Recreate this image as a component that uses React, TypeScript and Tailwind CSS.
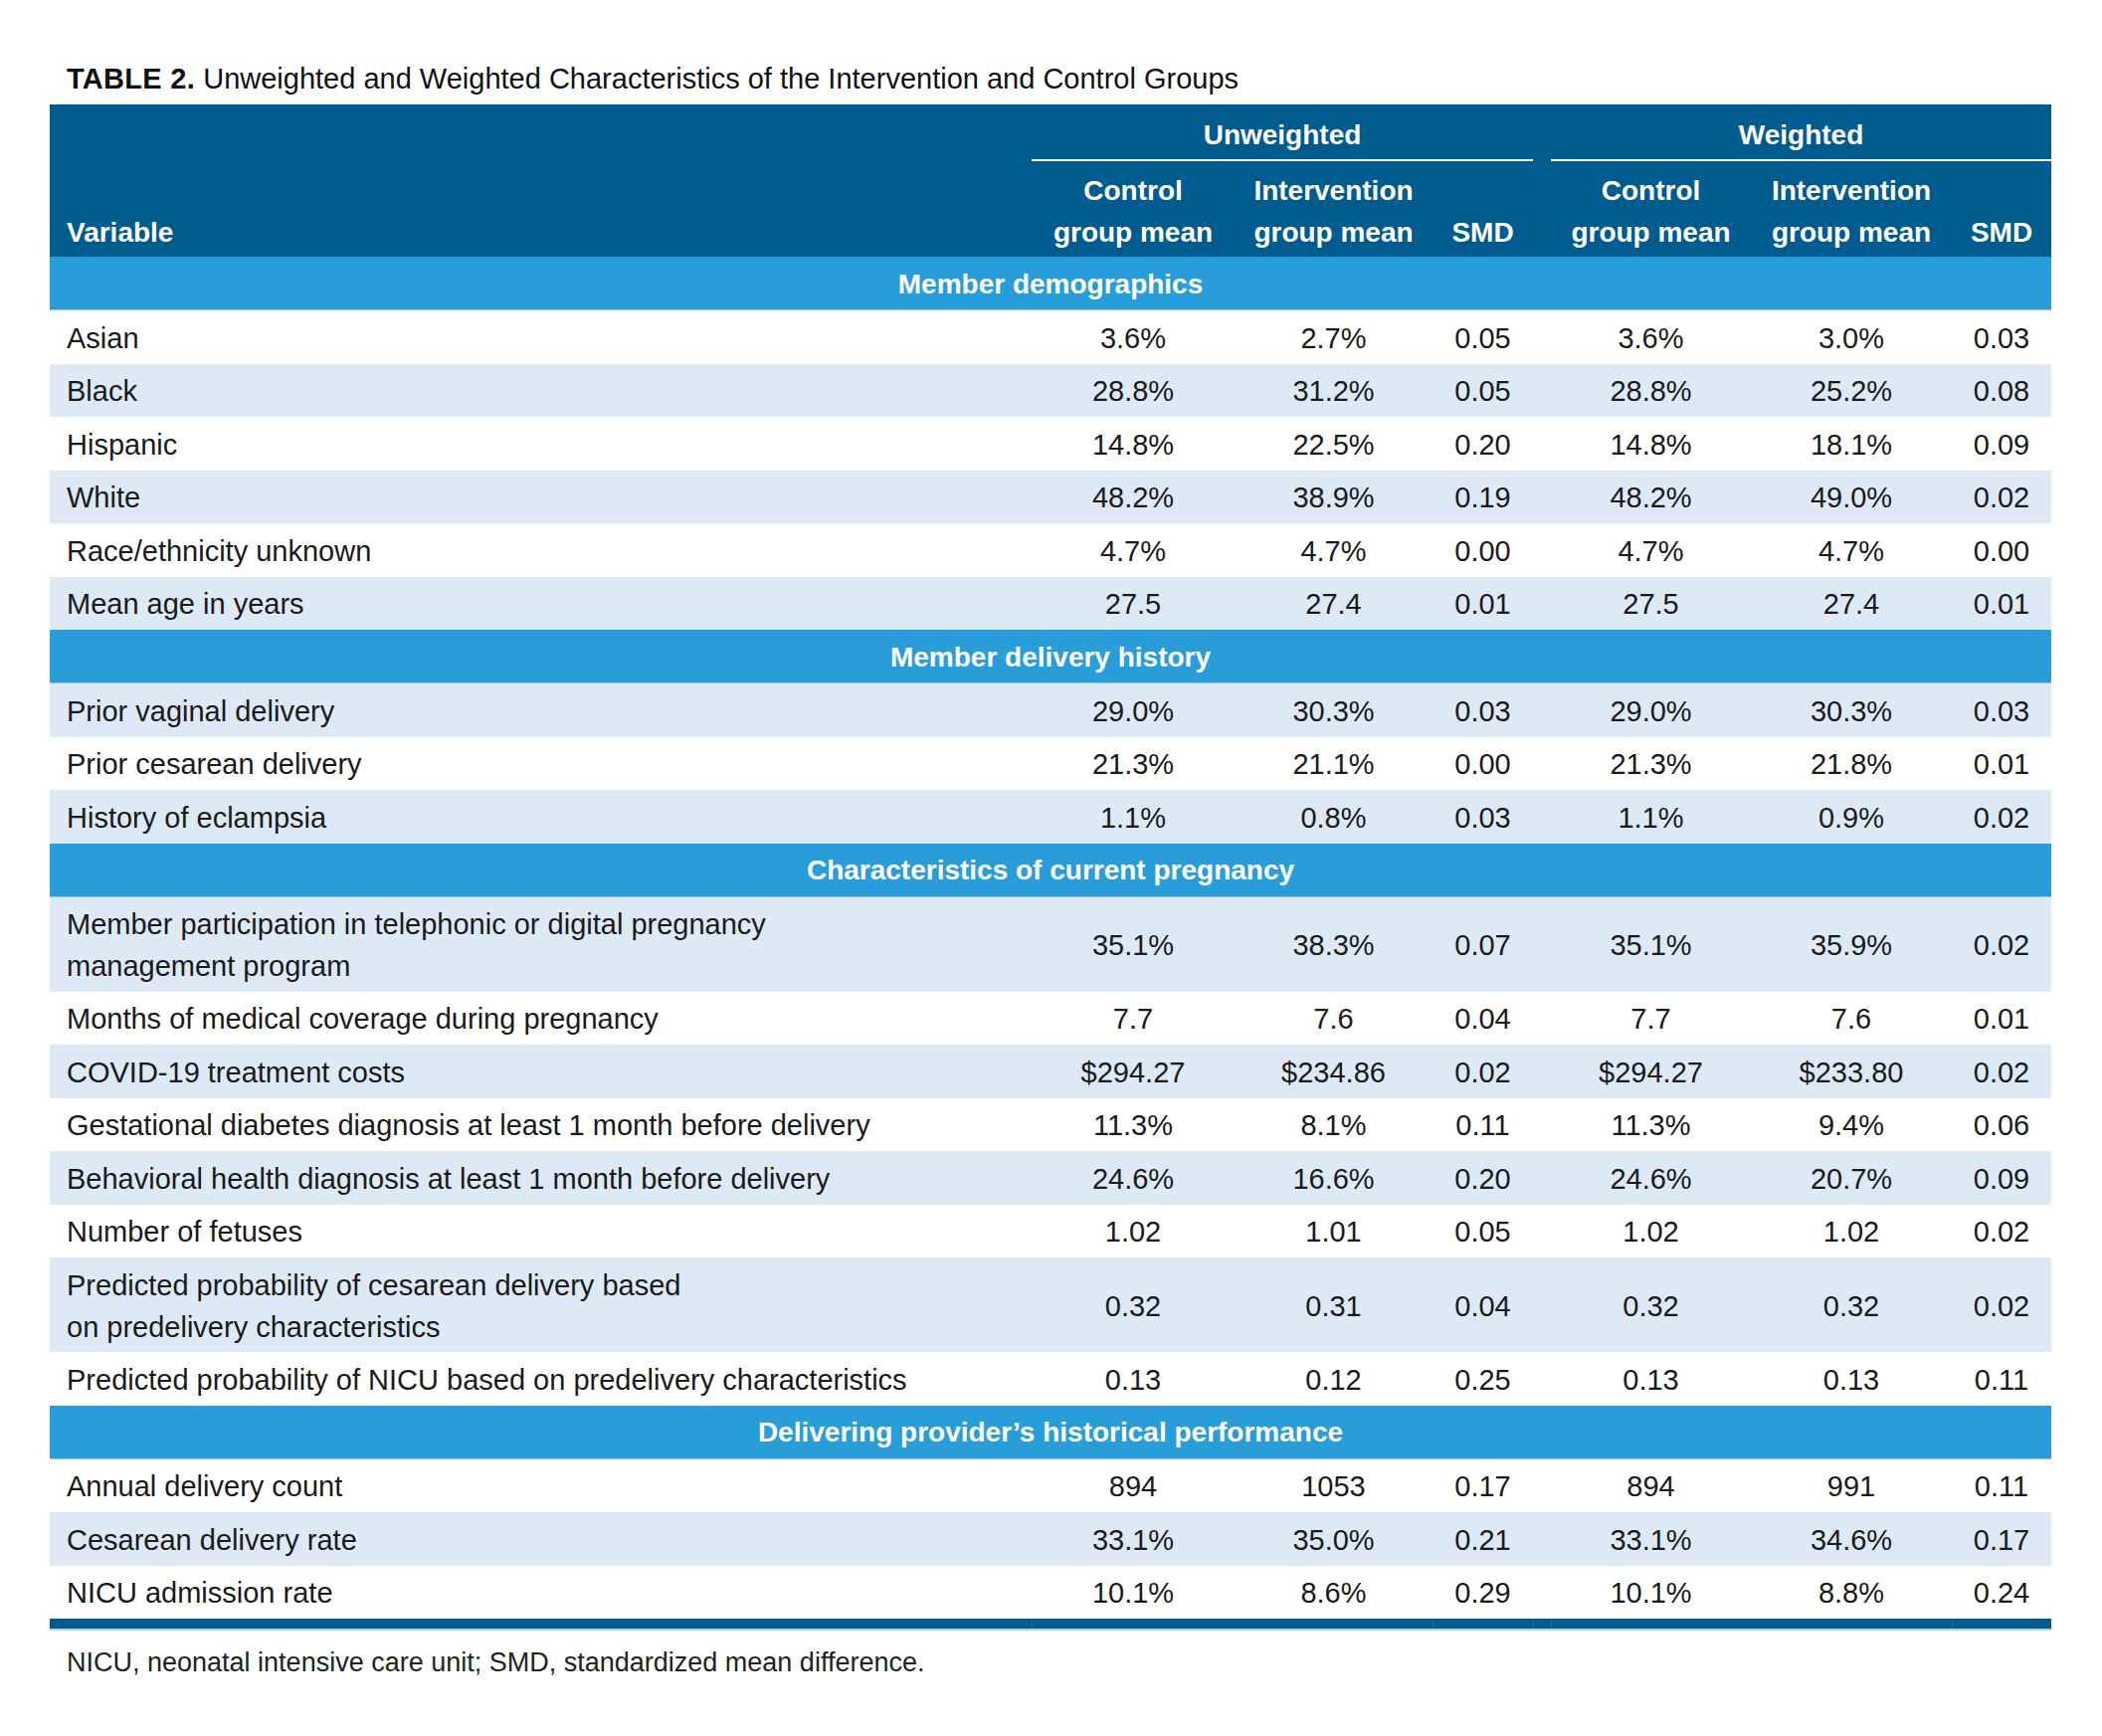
import React from 'react'

type Row = {
  label: React.ReactNode
  values: string[]
  shaded: boolean
  tall?: boolean
}

type Section = {
  title: string
  rows: Row[]
}

const sections: Section[] = [
  {
    title: 'Member demographics',
    rows: [
      { label: 'Asian', values: ['3.6%', '2.7%', '0.05', '3.6%', '3.0%', '0.03'], shaded: false },
      { label: 'Black', values: ['28.8%', '31.2%', '0.05', '28.8%', '25.2%', '0.08'], shaded: true },
      { label: 'Hispanic', values: ['14.8%', '22.5%', '0.20', '14.8%', '18.1%', '0.09'], shaded: false },
      { label: 'White', values: ['48.2%', '38.9%', '0.19', '48.2%', '49.0%', '0.02'], shaded: true },
      { label: 'Race/ethnicity unknown', values: ['4.7%', '4.7%', '0.00', '4.7%', '4.7%', '0.00'], shaded: false },
      { label: 'Mean age in years', values: ['27.5', '27.4', '0.01', '27.5', '27.4', '0.01'], shaded: true },
    ],
  },
  {
    title: 'Member delivery history',
    rows: [
      { label: 'Prior vaginal delivery', values: ['29.0%', '30.3%', '0.03', '29.0%', '30.3%', '0.03'], shaded: true },
      { label: 'Prior cesarean delivery', values: ['21.3%', '21.1%', '0.00', '21.3%', '21.8%', '0.01'], shaded: false },
      { label: 'History of eclampsia', values: ['1.1%', '0.8%', '0.03', '1.1%', '0.9%', '0.02'], shaded: true },
    ],
  },
  {
    title: 'Characteristics of current pregnancy',
    rows: [
      {
        label: (
          <>
            Member participation in telephonic or digital pregnancy
            <br />
            management program
          </>
        ),
        values: ['35.1%', '38.3%', '0.07', '35.1%', '35.9%', '0.02'],
        shaded: true,
        tall: true,
      },
      { label: 'Months of medical coverage during pregnancy', values: ['7.7', '7.6', '0.04', '7.7', '7.6', '0.01'], shaded: false },
      { label: 'COVID-19 treatment costs', values: ['$294.27', '$234.86', '0.02', '$294.27', '$233.80', '0.02'], shaded: true },
      {
        label: 'Gestational diabetes diagnosis at least 1 month before delivery',
        values: ['11.3%', '8.1%', '0.11', '11.3%', '9.4%', '0.06'],
        shaded: false,
      },
      {
        label: 'Behavioral health diagnosis at least 1 month before delivery',
        values: ['24.6%', '16.6%', '0.20', '24.6%', '20.7%', '0.09'],
        shaded: true,
      },
      { label: 'Number of fetuses', values: ['1.02', '1.01', '0.05', '1.02', '1.02', '0.02'], shaded: false },
      {
        label: (
          <>
            Predicted probability of cesarean delivery based
            <br />
            on predelivery characteristics
          </>
        ),
        values: ['0.32', '0.31', '0.04', '0.32', '0.32', '0.02'],
        shaded: true,
        tall: true,
      },
      {
        label: 'Predicted probability of NICU based on predelivery characteristics',
        values: ['0.13', '0.12', '0.25', '0.13', '0.13', '0.11'],
        shaded: false,
      },
    ],
  },
  {
    title: 'Delivering provider’s historical performance',
    rows: [
      { label: 'Annual delivery count', values: ['894', '1053', '0.17', '894', '991', '0.11'], shaded: false },
      { label: 'Cesarean delivery rate', values: ['33.1%', '35.0%', '0.21', '33.1%', '34.6%', '0.17'], shaded: true },
      { label: 'NICU admission rate', values: ['10.1%', '8.6%', '0.29', '10.1%', '8.8%', '0.24'], shaded: false },
    ],
  },
]

const cols = 'grid grid-cols-[987px_204px_199px_101px_18px_201px_202px_100px]'

function DataRow({ row }: { row: Row }) {
  const v = row.values
  return (
    <div
      className={`${cols} items-center pt-[2px] text-[29px] leading-[42px] text-[#1a1a1a] ${row.tall ? 'h-[95px]' : 'h-[53.5px]'} ${
        row.shaded ? 'bg-[#dde9f5]' : 'bg-white'
      }`}
    >
      <div className="pl-[17px]">{row.label}</div>
      <div className="text-center">{v[0]}</div>
      <div className="text-center">{v[1]}</div>
      <div className="text-center">{v[2]}</div>
      <div />
      <div className="text-center">{v[3]}</div>
      <div className="text-center">{v[4]}</div>
      <div className="text-center">{v[5]}</div>
    </div>
  )
}

export default function App() {
  return (
    <div className="min-h-[1745px] w-[2113px] bg-white pt-[62px] font-['Liberation_Sans',Arial,sans-serif]">
      <div className="ml-[50px] w-[2012px]">
        <h1 className="pl-[17px] text-[29px] leading-[34px] text-[#111]">
          <span className="font-bold tracking-[0.3px]">TABLE 2.</span> Unweighted and Weighted Characteristics of the
          Intervention and Control Groups
        </h1>

        <div className="mt-[9px]">
          {/* Header */}
          <div className="bg-[#005b8e] text-[28px] font-bold leading-[42px] text-white">
            <div className={`${cols} h-[57px]`}>
              <div />
              <div className="col-span-3 border-b-[2px] border-white pt-[10px] text-center">Unweighted</div>
              <div />
              <div className="col-span-3 border-b-[2px] border-white pt-[10px] text-center">Weighted</div>
            </div>
            <div className={`${cols} h-[96px] items-end pb-[3px]`}>
              <div className="pl-[17px]">Variable</div>
              <div className="text-center">
                Control
                <br />
                group mean
              </div>
              <div className="text-center">
                Intervention
                <br />
                group mean
              </div>
              <div className="text-center">SMD</div>
              <div />
              <div className="text-center">
                Control
                <br />
                group mean
              </div>
              <div className="text-center">
                Intervention
                <br />
                group mean
              </div>
              <div className="text-center">SMD</div>
            </div>
          </div>

          {sections.map((section) => (
            <div key={section.title}>
              <div className="flex h-[54px] items-center justify-center border-b border-[#8fc9ec] bg-[#289dd9] pt-[2px] text-[28px] font-bold text-white">
                {section.title}
              </div>
              {section.rows.map((row, i) => (
                <DataRow key={i} row={row} />
              ))}
            </div>
          ))}

          {/* Bottom rule */}
          <div className="flex h-[12px] border-b-[2px] border-[#a8d3ef] bg-[#005b8e]">
            <div className="w-[987px]" />
            <div className="w-[403px] border-l border-[#1c6d9d]" />
            <div className="w-[101px] border-l border-[#1c6d9d]" />
            <div className="w-[18px] border-l border-[#1c6d9d]" />
            <div className="w-[403px] border-l border-[#1c6d9d]" />
            <div className="w-[100px] border-l border-[#1c6d9d]" />
          </div>
        </div>

        <p className="mt-[15px] pl-[17px] text-[27px] leading-[34px] text-[#222]">
          NICU, neonatal intensive care unit; SMD, standardized mean difference.
        </p>
      </div>
    </div>
  )
}
